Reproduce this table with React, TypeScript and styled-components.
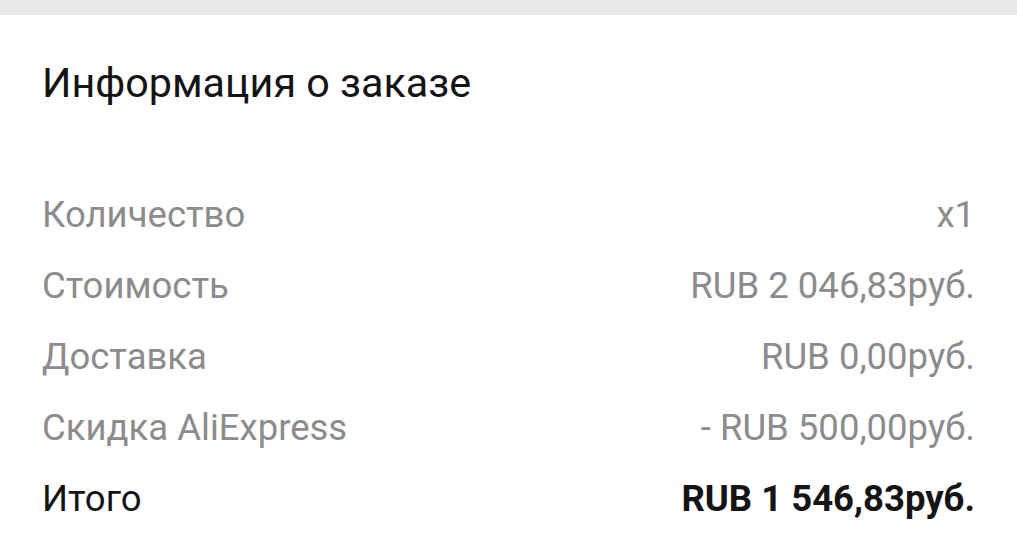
import React from "react";
import styled, { createGlobalStyle } from "styled-components";

const Global = createGlobalStyle`
  html, body { margin: 0; padding: 0; background: #ffffff; }
  body { font-family: Roboto, "Noto Sans", "Liberation Sans", sans-serif; }
`;

const Page = styled.div`
  display: flex;
  flex-direction: column;
  width: 1017px;
  height: 545px;
  overflow: hidden;
  background: #ffffff;
`;

const TopBar = styled.div`
  height: 15px;
  background: #e9e9e9;
  flex: none;
`;

const Card = styled.section`
  display: flex;
  flex-direction: column;
  padding: 45px 42px 0 42px;
`;

const Title = styled.h2`
  margin: 0 0 72px 0;
  font-size: 41.3px;
  font-weight: 400;
  line-height: 47px;
  color: #141414;
`;

const Rows = styled.div`
  display: flex;
  flex-direction: column;
`;

const Row = styled.div`
  display: flex;
  justify-content: space-between;
  align-items: baseline;
  height: 71px;
  line-height: 71px;
  font-size: 36.5px;
`;

const Label = styled.span<{ $strong?: boolean }>`
  color: ${(p) => (p.$strong ? "#141414" : "#8c8c8c")};
  font-weight: 400;
`;

const Value = styled.span<{ $strong?: boolean }>`
  color: ${(p) => (p.$strong ? "#141414" : "#8c8c8c")};
  font-weight: ${(p) => (p.$strong ? 700 : 400)};
`;

const rows = [
  { label: "Количество", value: "x1" },
  { label: "Стоимость", value: "RUB 2 046,83руб." },
  { label: "Доставка", value: "RUB 0,00руб." },
  { label: "Скидка AliExpress", value: "- RUB 500,00руб." },
];

export default function App() {
  return (
    <>
      <Global />
      <Page>
        <TopBar />
        <Card>
          <Title>Информация о заказе</Title>
          <Rows>
            {rows.map((r) => (
              <Row key={r.label}>
                <Label>{r.label}</Label>
                <Value>{r.value}</Value>
              </Row>
            ))}
            <Row>
              <Label $strong>Итого</Label>
              <Value $strong>RUB 1 546,83руб.</Value>
            </Row>
          </Rows>
        </Card>
      </Page>
    </>
  );
}
